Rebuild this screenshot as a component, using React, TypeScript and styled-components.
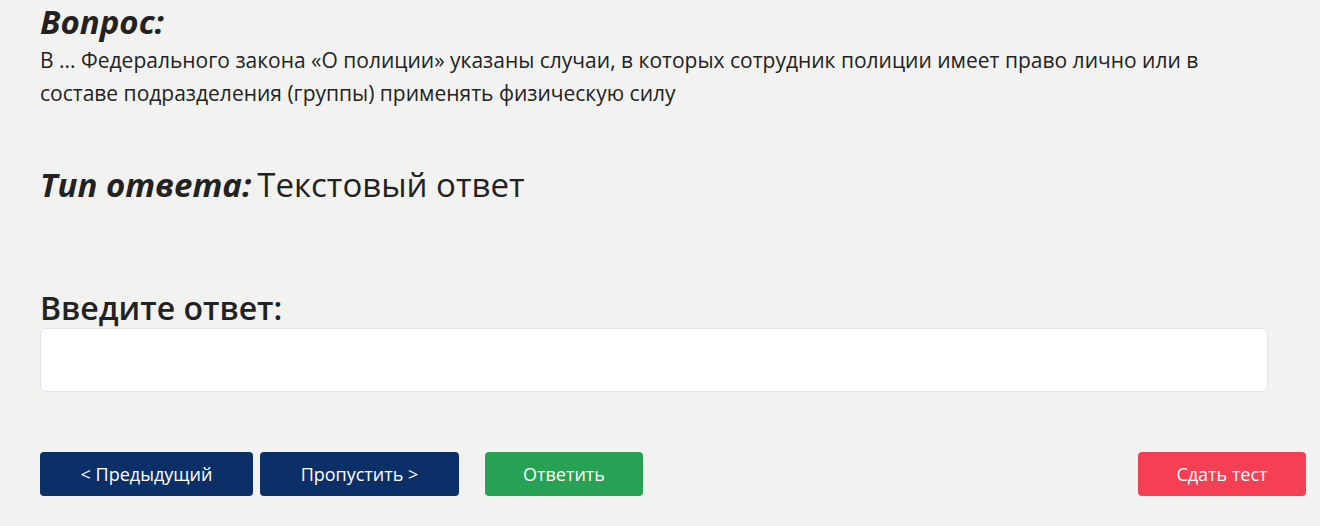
import React from "react";
import styled, { createGlobalStyle } from "styled-components";

const GlobalStyle = createGlobalStyle`
  html, body {
    margin: 0;
    padding: 0;
    background: #f2f2f0;
  }
  body {
    font-family: "Open Sans", "Noto Sans", sans-serif;
    color: #222;
  }
`;

const Page = styled.div`
  padding: 0 14px 0 40px;
  display: flex;
  flex-direction: column;
`;

const Heading = styled.h2`
  margin: 0;
  font-size: 33px;
  line-height: 44px;
  font-weight: 700;
  font-style: italic;
  color: #222;
`;

const QuestionText = styled.p`
  margin: 0;
  font-size: 21px;
  line-height: 33px;
  color: #222;
  max-width: 1230px;
`;

const AnswerType = styled.div`
  margin-top: 55px;
  font-size: 33px;
  line-height: 40px;
  color: #222;
`;

const TypeLabel = styled.span`
  font-weight: 700;
  font-style: italic;
  margin-right: 6px;
`;

const InputLabel = styled.label`
  margin-top: 83px;
  font-size: 32px;
  line-height: 40px;
  font-weight: 600;
  color: #222;
`;

const AnswerInput = styled.input`
  box-sizing: border-box;
  margin-top: 0;
  width: 1228px;
  height: 64px;
  border: 1px solid #e3e3e3;
  border-radius: 6px;
  background: #fff;
  padding: 0 16px;
  font-size: 20px;
  font-family: inherit;
  outline: none;
`;

const Actions = styled.div`
  margin-top: 60px;
  display: flex;
  align-items: center;
`;

const Group = styled.div`
  display: flex;
  gap: 7px;
`;

const Button = styled.button<{ $variant: "nav" | "ok" | "danger"; $width: number }>`
  height: 44px;
  width: ${({ $width }) => $width}px;
  border: none;
  border-radius: 4px;
  font-family: inherit;
  font-size: 18px;
  color: #fff;
  cursor: pointer;
  background: ${({ $variant }) =>
    $variant === "nav" ? "#0b3068" : $variant === "ok" ? "#27a153" : "#f43f55"};
`;

const Spacer = styled.div`
  flex: 1;
`;

export default function App() {
  return (
    <>
      <GlobalStyle />
      <Page>
        <Heading>Вопрос:</Heading>
        <QuestionText>
          В ... Федерального закона «О полиции» указаны случаи, в которых сотрудник
          полиции имеет право лично или в составе подразделения (группы) применять
          физическую силу
        </QuestionText>
        <AnswerType>
          <TypeLabel>Тип ответа:</TypeLabel>Текстовый ответ
        </AnswerType>
        <InputLabel htmlFor="answer">Введите ответ:</InputLabel>
        <AnswerInput id="answer" type="text" />
        <Actions>
          <Group>
            <Button $variant="nav" $width={213}>&lt; Предыдущий</Button>
            <Button $variant="nav" $width={199}>Пропустить &gt;</Button>
          </Group>
          <Button $variant="ok" $width={158} style={{ marginLeft: 26 }}>
            Ответить
          </Button>
          <Spacer />
          <Button $variant="danger" $width={168}>Сдать тест</Button>
        </Actions>
      </Page>
    </>
  );
}
